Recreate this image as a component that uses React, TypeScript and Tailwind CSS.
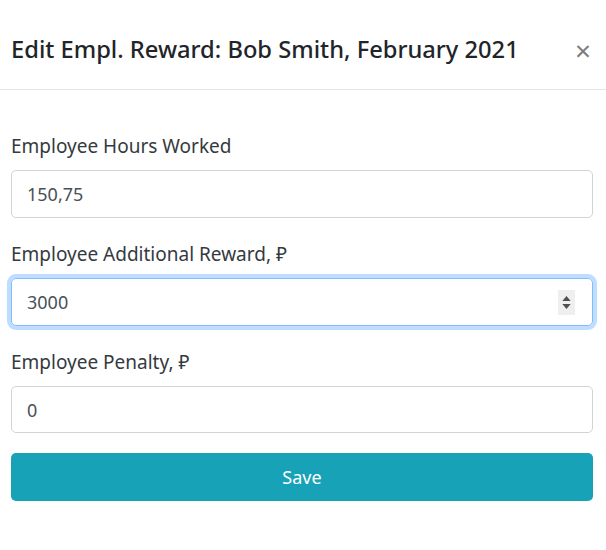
export default function App() {
  const font = { fontFamily: '"Noto Sans", "Open Sans", sans-serif' }
  return (
    <div className="w-[606px] h-[550px] bg-white text-[#212529]" style={font}>
      <div className="flex items-center justify-between h-[90px] pt-[10px] pl-[11px] pr-[15px] border-b border-[#e3e6e9]">
        <h1 className="text-[23.7px] font-medium leading-none text-[#212529]">Edit Empl. Reward: Bob Smith, February 2021</h1>
        <button className="text-[28px] leading-none text-[#7d7d7d]">×</button>
      </div>
      <div className="pl-[11px] pr-[13px] pt-[44px]">
        <div className="mb-[24px]">
          <label className="block text-[19px] leading-[24px] mb-[12px] text-[#343a40]">Employee Hours Worked</label>
          <input readOnly value="150,75" className="w-full h-[48px] px-[15px] text-[18px] text-[#495057] border border-[#ced4da] rounded-[5px] outline-none" />
        </div>
        <div className="mb-[24px]">
          <label className="block text-[19px] leading-[24px] mb-[12px] text-[#343a40]">Employee Additional Reward, ₽</label>
          <div className="relative">
            <input readOnly value="3000" className="w-full h-[48px] px-[15px] text-[18px] text-[#495057] border border-[#80bdff] rounded-[5px] outline-none shadow-[0_0_0_4px_rgba(0,123,255,0.25)]" />
            <div className="absolute right-[18px] top-[12px] w-[17px] h-[25px] bg-[#efefef] flex flex-col items-center justify-center gap-[3px]">
              <svg width="9" height="5" viewBox="0 0 10 6"><path d="M5 0 L10 6 L0 6 Z" fill="#505050" /></svg>
              <svg width="9" height="5" viewBox="0 0 10 6"><path d="M0 0 L10 0 L5 6 Z" fill="#505050" /></svg>
            </div>
          </div>
        </div>
        <div className="mb-[20px]">
          <label className="block text-[19px] leading-[24px] mb-[12px] text-[#343a40]">Employee Penalty, ₽</label>
          <input readOnly value="0" className="w-full h-[47px] px-[15px] text-[18px] text-[#495057] border border-[#ced4da] rounded-[5px] outline-none" />
        </div>
        <button className="w-full h-[48px] bg-[#17a2b8] text-white text-[18px] rounded-[5px]">Save</button>
      </div>
    </div>
  )
}
